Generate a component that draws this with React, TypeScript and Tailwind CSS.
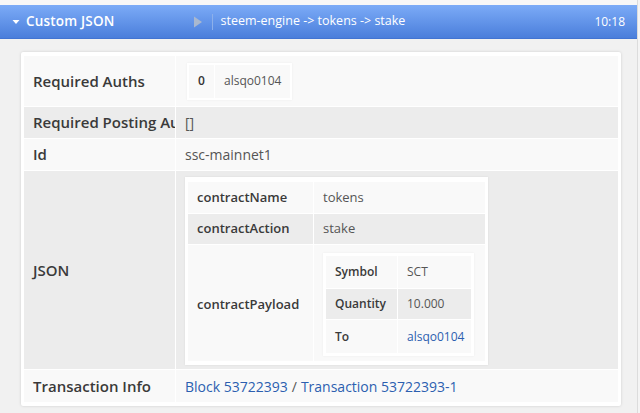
import React from 'react';

const font = { fontFamily: '"Open Sans", "Liberation Sans", sans-serif' };

function KV({ label, children, grey, h }: { label: string; children: React.ReactNode; grey?: boolean; h: string }) {
  const bg = grey ? 'bg-[#ececec]' : 'bg-[#f9f9f9]';
  return (
    <div className={`grid grid-cols-[125px_1fr] gap-px ${h}`}>
      <div className={`${bg} flex items-center pl-[9px] text-[13px] font-semibold text-[#3a3a3a]`}>{label}</div>
      <div className={`${bg} flex items-center pl-[9px] text-[13px] text-[#555]`}>{children}</div>
    </div>
  );
}

export default function App() {
  return (
    <div className="w-[640px] h-[413px] overflow-hidden bg-[#f1f1f1] flex" style={font}>
      <div className="w-[637px] flex flex-col">
        <div className="h-[5px] bg-[#f7f7f7]" />
        <div className="h-[34px] flex items-center bg-gradient-to-b from-[#7cabf7] to-[#4a7edb] border-b border-[#4274d2] text-white">
          <svg width="8" height="6" viewBox="0 0 8 6" className="ml-[12px]">
            <path d="M0.5 1 L7.5 1 L4 5 Z" fill="white" />
          </svg>
          <span className="ml-[6px] text-[13.5px] font-semibold tracking-[0.2px]">Custom JSON</span>
          <svg width="10" height="12" viewBox="0 0 10 12" className="ml-[78px]">
            <path d="M1 0.5 L9 6 L1 11.5 Z" fill="#a9b8cf" />
          </svg>
          <div className="ml-[9px] w-px h-[16px] bg-[#8db0ea]" />
          <span className="ml-[8px] text-[12.5px]">steem-engine -&gt; tokens -&gt; stake</span>
          <span className="ml-auto mr-[12px] text-[12px]">10:18</span>
        </div>
        <div className="pt-[13px] pl-[21px] pr-[16px]">
          <div className="bg-white shadow-[0_0_3px_rgba(0,0,0,0.15)] rounded-[2px] px-[3px] pt-[4px] pb-[4px]">
            <div className="flex flex-col gap-px bg-white">
              <div className="grid grid-cols-[151px_1fr] gap-px h-[50px]">
                <div className="bg-[#f9f9f9] flex items-center pl-[9px] text-[15px] font-semibold text-[#3a3a3a]">Required Auths</div>
                <div className="bg-[#f9f9f9] flex items-center pl-[11px]">
                  <div className="bg-white p-[2px] shadow-[0_0_2px_rgba(0,0,0,0.06)] flex gap-px">
                    <div className="bg-[#f9f9f9] h-[33px] w-[25px] flex items-center justify-center text-[12px] font-semibold text-[#333]">0</div>
                    <div className="bg-[#f9f9f9] h-[33px] px-[9px] flex items-center text-[12px] text-[#555]">alsqo0104</div>
                  </div>
                </div>
              </div>
              <div className="grid grid-cols-[151px_1fr] gap-px h-[31px]">
                <div className="bg-[#ececec] flex items-center pl-[9px] text-[15px] font-semibold text-[#3a3a3a] whitespace-nowrap overflow-hidden">Required Posting Auths</div>
                <div className="bg-[#ececec] flex items-center pl-[9px] text-[14px] text-[#555]">[]</div>
              </div>
              <div className="grid grid-cols-[151px_1fr] gap-px h-[31px]">
                <div className="bg-[#f9f9f9] flex items-center pl-[9px] text-[15px] font-semibold text-[#3a3a3a]">Id</div>
                <div className="bg-[#f9f9f9] flex items-center pl-[9px] text-[14px] text-[#555]">ssc-mainnet1</div>
              </div>
              <div className="grid grid-cols-[151px_1fr] gap-px h-[198px]">
                <div className="bg-[#ececec] flex items-center pl-[9px] text-[15px] font-semibold text-[#3a3a3a]">JSON</div>
                <div className="bg-[#ececec] pl-[9px] pt-[6px]">
                  <div className="w-[303px] bg-white shadow-[0_0_2px_rgba(0,0,0,0.08)] p-[3px] pt-[5px] pb-[4px] flex flex-col gap-px">
                    <KV label="contractName" h="h-[31px]">tokens</KV>
                    <KV label="contractAction" h="h-[30px]" grey>stake</KV>
                    <div className="grid grid-cols-[125px_1fr] gap-px h-[116px]">
                      <div className="bg-[#f9f9f9] flex items-center pl-[9px] pt-[4px] text-[13px] font-semibold text-[#3a3a3a]">contractPayload</div>
                      <div className="bg-[#f9f9f9] pl-[9px] pt-[8px]">
                        <div className="w-[151px] bg-white shadow-[0_0_2px_rgba(0,0,0,0.06)] px-[3px] pt-[3px] pb-[3px] flex flex-col gap-px">
                          {[
                            ['Symbol', 'SCT', false, 'h-[32px]'],
                            ['Quantity', '10.000', true, 'h-[30px]'],
                            ['To', 'alsqo0104', false, 'h-[33px]'],
                          ].map(([k, v, g, h]) => (
                            <div key={k as string} className={`grid grid-cols-[71px_1fr] gap-px ${h}`}>
                              <div className={`${g ? 'bg-[#ececec]' : 'bg-[#f9f9f9]'} flex items-center pl-[9px] text-[12px] font-semibold text-[#3a3a3a]`}>{k}</div>
                              <div className={`${g ? 'bg-[#ececec]' : 'bg-[#f9f9f9]'} flex items-center pl-[9px] text-[12px] ${k === 'To' ? 'text-[#2c5fb0]' : 'text-[#555]'}`}>{v}</div>
                            </div>
                          ))}
                        </div>
                      </div>
                    </div>
                  </div>
                </div>
              </div>
              <div className="grid grid-cols-[151px_1fr] gap-px h-[32px]">
                <div className="bg-[#f9f9f9] flex items-center pl-[9px] text-[15px] font-semibold text-[#3a3a3a]">Transaction Info</div>
                <div className="bg-[#f9f9f9] flex items-center pl-[9px] text-[14px] text-[#555]">
                  <span className="text-[#2c5fb0]">Block 53722393</span>
                  <span className="mx-[4px]">/</span>
                  <span className="text-[#2c5fb0]">Transaction 53722393-1</span>
                </div>
              </div>
            </div>
          </div>
        </div>
      </div>
      <div className="flex-1 border-l border-[#dcdcdc] bg-[#f4f4f4]" />
    </div>
  );
}
